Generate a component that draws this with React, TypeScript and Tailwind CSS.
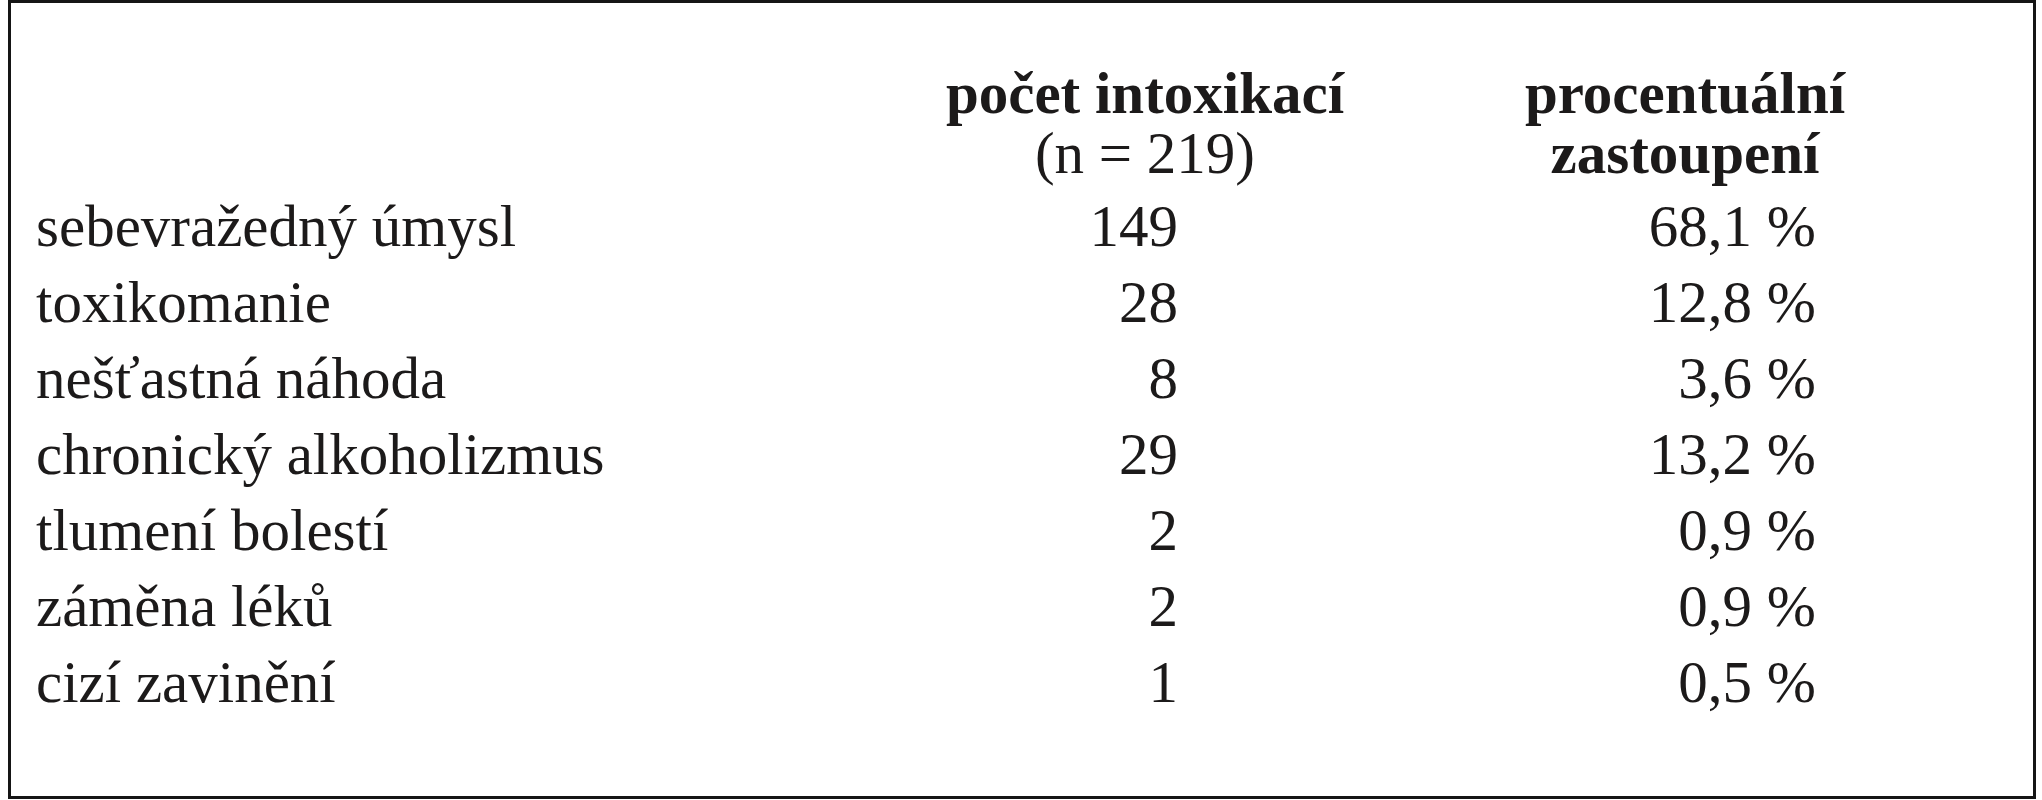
const rows = [
  { label: 'sebevražedný úmysl', count: '149', pct: '68,1 %' },
  { label: 'toxikomanie', count: '28', pct: '12,8 %' },
  { label: 'nešťastná náhoda', count: '8', pct: '3,6 %' },
  { label: 'chronický alkoholizmus', count: '29', pct: '13,2 %' },
  { label: 'tlumení bolestí', count: '2', pct: '0,9 %' },
  { label: 'záměna léků', count: '2', pct: '0,9 %' },
  { label: 'cizí zavinění', count: '1', pct: '0,5 %' },
];

export default function App() {
  return (
    <div className="h-[800px] w-[2042px] bg-white pl-[8px] font-['Liberation_Serif',serif] text-[#1c1a1a]">
      <div className="h-[799px] w-[2028px] border-[3px] border-[#151515] pl-[25px] pt-[60px]">
        <div className="grid grid-cols-[764px_410px_390px] gap-x-[140px] text-[59px]">
          <div />
          <div className="pb-[5px] text-center leading-[60px]">
            <div className="font-bold">počet intoxikací</div>
            <div>(n = 219)</div>
          </div>
          <div className="pb-[5px] text-center leading-[60px] font-bold">
            <div>procentuální</div>
            <div>zastoupení</div>
          </div>
          {rows.map((r) => (
            <div key={r.label} className="contents">
              <div className="leading-[76px]">{r.label}</div>
              <div className="pr-[172px] text-right leading-[76px]">{r.count}</div>
              <div className="pr-[64px] text-right leading-[76px]">{r.pct}</div>
            </div>
          ))}
        </div>
      </div>
    </div>
  );
}
